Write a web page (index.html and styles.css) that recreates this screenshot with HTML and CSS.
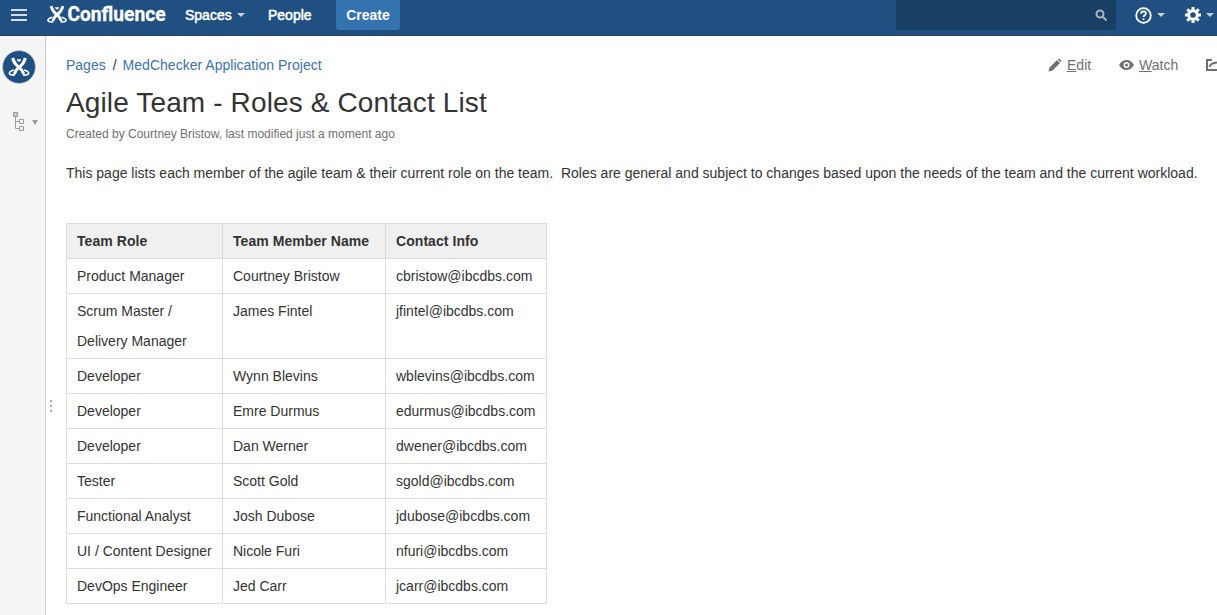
FILE: index.html
```html
<!DOCTYPE html>
<html lang="en">
<head>
<meta charset="utf-8">
<title>Agile Team - Roles &amp; Contact List</title>
<link rel="stylesheet" href="styles.css">
</head>
<body>
<svg class="defs" width="0" height="0">
  <symbol id="charlie" viewBox="0 0 64 60">
    <path class="head" d="M26 5Q32 9 38 5L37 11Q32 17 27 11z"/>
    <path class="limb" d="M13 3Q18 21 31 30 41 37 46 51M51 3Q46 21 33 30 23 37 18 51"/>
    <path class="foot" d="M17 39Q3 43 3 49 4 55 20 54M47 39Q61 43 61 49 60 55 44 54"/>
  </symbol>
</svg>
<header class="topbar">
  <svg class="burger" width="16" height="12" viewBox="0 0 16 12"><path d="M0 1h16M0 6h16M0 11h16"/></svg>
  <a class="logo"><svg width="120" height="30" viewBox="0 0 120 30"><use href="#charlie" x="0" y="5" width="20" height="19"/><text x="20.500" y="21" textLength="98" lengthAdjust="spacingAndGlyphs">Confluence</text></svg></a>
  <a class="nav spaces">Spaces</a><i class="caret"></i>
  <a class="nav people">People</a>
  <a class="create">Create</a>
  <div class="search"><svg width="13" height="13" viewBox="0 0 13 13"><circle cx="5" cy="5" r="3.500"/><path d="M7.800 7.800 11.500 11.500"/></svg></div>
  <svg class="help" width="17" height="17" viewBox="0 0 17 17"><circle cx="8.500" cy="8.500" r="7.300"/><path d="M6.100 6.800C6.100 5.200 7.100 4.400 8.500 4.400s2.400.9 2.400 2.200c0 1.800-2.400 1.700-2.400 3.500"/><path d="M8.500 11.400v1.800"/></svg><i class="caret"></i>
  <svg class="gear" width="16" height="16" viewBox="0 0 16 16"><circle cx="8" cy="8" r="4.300"/><path d="M8 0v3M8 13v3M0 8h3M13 8h3M2.300 2.300l2.200 2.200M11.500 11.500l2.200 2.200M2.300 13.700l2.200-2.200M11.500 4.500l2.200-2.200"/></svg><i class="caret last"></i>
</header>
<div class="body">
  <aside class="sidebar">
    <a class="avatar"><svg width="22" height="20"><use href="#charlie" width="22" height="20"/></svg></a>
    <div class="tree"><svg width="12" height="19" viewBox="0 0 12 19"><path class="root" d="M.5.5h4v4h-4z"/><path d="M2.500 5v11.500H6M2.500 9.500H6M6.500 7.500h4v4h-4zM6.500 14.500h4v4h-4z"/></svg><i></i></div>
  </aside>
  <div class="handle"><i></i><i></i><i></i></div>
  <main class="page">
    <div class="pagebar">
      <nav class="crumbs"><a>Pages</a><span>/</span><a class="project">MedChecker Application Project</a></nav>
      <div class="actions">
        <svg class="pencil" width="14" height="14" viewBox="0 0 14 14"><path d="M.5 13.500 1.500 9.500 9 2l3 3-7.500 7.500zM9.700 1.300Q11 .2 12.200 1.300l.5.500q1 1.200 0 2.400z"/></svg>
        <a class="edit"><u>E</u>dit</a>
        <svg class="eye" width="15" height="10" viewBox="0 0 15 10"><path fill-rule="evenodd" d="M0 5Q3 0 7.500 0T15 5Q12 10 7.500 10T0 5zM7.500 2a3 3 0 1 0 0 6 3 3 0 1 0 0-6z"/><circle cx="7.500" cy="5" r="1.500"/></svg>
        <a class="watch"><u>W</u>atch</a>
        <svg class="share" width="11" height="12" viewBox="0 0 11 12"><path d="M6 1H1v10h10"/><path class="arrow" d="M3.500 8Q4.500 4 11 3.500"/></svg>
      </div>
    </div>
    <h1><span>Agile Team - Roles &amp; Contact List</span></h1>
    <p class="meta">Created by Courtney Bristow, last modified just a moment ago</p>
    <p class="intro">This page lists each member of the agile team &amp; their current role on the team.&nbsp; Roles are general and subject to changes based upon the needs of the team and the current workload.</p>
    <table>
      <colgroup><col class="c1"><col class="c2"><col class="c3"></colgroup>
      <tr><th>Team Role</th><th>Team Member Name</th><th>Contact Info</th></tr>
      <tr><td>Product Manager</td><td>Courtney Bristow</td><td>cbristow@ibcdbs.com</td></tr>
      <tr><td>Scrum Master /<br>Delivery Manager</td><td>James Fintel</td><td>jfintel@ibcdbs.com</td></tr>
      <tr><td>Developer</td><td>Wynn Blevins</td><td>wblevins@ibcdbs.com</td></tr>
      <tr><td>Developer</td><td>Emre Durmus</td><td>edurmus@ibcdbs.com</td></tr>
      <tr><td>Developer</td><td>Dan Werner</td><td>dwener@ibcdbs.com</td></tr>
      <tr><td>Tester</td><td>Scott Gold</td><td>sgold@ibcdbs.com</td></tr>
      <tr><td>Functional Analyst</td><td>Josh Dubose</td><td>jdubose@ibcdbs.com</td></tr>
      <tr><td>UI / Content Designer</td><td>Nicole Furi</td><td>nfuri@ibcdbs.com</td></tr>
      <tr><td>DevOps Engineer</td><td>Jed Carr</td><td>jcarr@ibcdbs.com</td></tr>
    </table>
  </main>
</div>
</body>
</html>
```
FILE: styles.css
```css
* { box-sizing: border-box; }
body { margin: 0; height: 615px; overflow: hidden; background: #fff; color: #333; font: 14px/20px "Liberation Sans", Arial, sans-serif; }
svg { display: block; flex: none; }
.defs { position: absolute; }
.head { fill: #fff; }
.limb { fill: none; stroke: #fff; stroke-width: 9; }
.foot { fill: none; stroke: #fff; stroke-width: 5; }
.topbar { display: flex; align-items: center; height: 36px; padding: 0 0 5px 11px; background: #205081; border-bottom: 1px solid #2e3d54; color: #fff; white-space: nowrap; }
.burger { fill: none; stroke: #d3dce6; stroke-width: 2; }
.logo { margin-left: 20px; width: 119px; height: 30px; fill: #fff; }
.logo svg { overflow: visible; }
.logo text { font: bold 20.5px Roboto, sans-serif; stroke: #fff; stroke-width: .3px; }
.nav { -webkit-text-stroke: .5px #fff; }
.spaces { margin-left: 19px; width: 47px; }
.people { margin-left: 23px; width: 45px; }
.caret { flex: none; margin-left: 5px; border: 4px solid transparent; border-top-color: #c3d0de; border-bottom: 0; }
.create { margin-left: 23px; width: 64px; height: 30px; background: #3572b0; border-radius: 0 0 3px 3px; font-weight: bold; text-align: center; line-height: 30px; }
.search { margin-left: auto; width: 220px; height: 30px; padding: 9px 8px 0; display: flex; justify-content: flex-end; background: #1a3f65; border-radius: 0 0 3px 3px; }
.search svg { fill: none; stroke: #a8b5c4; stroke-width: 2; }
.help { margin-left: 19px; fill: none; stroke: #fff; stroke-width: 1.8; }
.gear { margin-left: 20px; fill: none; stroke: #fff; stroke-width: 3; }
.last { margin-right: 3px; }
.body { display: flex; height: 579px; }
.sidebar { flex: none; width: 46px; padding: 14px 0 0 2px; background: #f5f5f5; border-right: 1px solid #ccc; }
.avatar { display: flex; align-items: center; justify-content: center; width: 34px; height: 34px; border-radius: 50%; background: #205081; border: 1px solid #c3cdd8; }
.tree { display: flex; align-items: center; margin: 28px 0 0 11px; gap: 7px; }
.tree svg { fill: none; stroke: #999; }
.tree .root { fill: #ccc; }
.tree i { margin-top: 2px; border: 3px solid transparent; border-top: 5px solid #999; border-bottom: 0; }
.handle { flex: none; width: 20px; padding: 364px 0 0 4px; }
.handle i { display: block; width: 2px; height: 2px; margin-bottom: 3px; background: #aaa; }
.page { flex: 1; min-width: 0; padding-top: 19px; }
.pagebar { display: flex; height: 20px; justify-content: space-between; }
.crumbs { display: flex; color: #3b73af; }
.crumbs span { margin: 0 6px 0 7px; color: #333; }
.project { letter-spacing: .02px; }
.actions { display: flex; align-items: center; color: #707070; fill: #707070; }
.edit { margin-left: 5px; width: 25px; }
.eye { margin-left: 27px; }
.watch { margin-left: 5px; width: 40px; }
.share { margin-left: 27px; fill: none; stroke: #707070; stroke-width: 2; }
h1 { margin: 10px 0 0; font-size: 28px; line-height: 36px; font-weight: normal; letter-spacing: .13px; white-space: nowrap; }
.meta { margin: 3px 0 0; font-size: 12px; line-height: 20px; color: #707070; white-space: nowrap; }
.intro { margin: 19px 0 0; line-height: 20px; white-space: nowrap; }
table { margin-top: 40px; width: 481px; table-layout: fixed; border-collapse: collapse; }
.c1 { width: 156px; }
.c2 { width: 163px; }
.c3 { width: 161px; }
th, td { border: 1px solid #ddd; padding: 2px 10px; line-height: 30px; text-align: left; vertical-align: top; white-space: nowrap; }
th { background: #f0f0f0; letter-spacing: .06px; }
```
